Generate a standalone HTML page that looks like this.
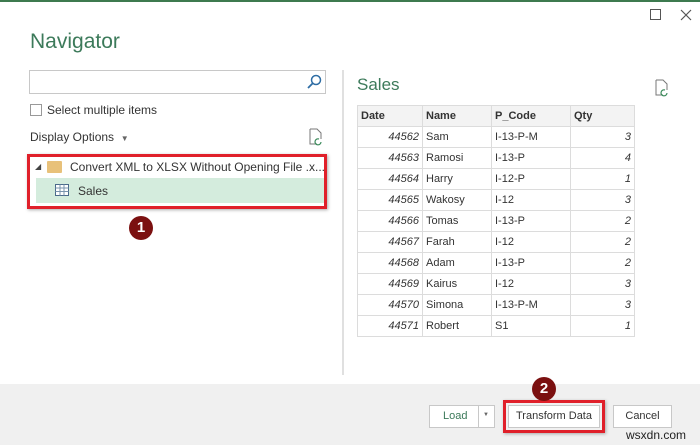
<!DOCTYPE html>
<html><head><style>
*{box-sizing:border-box;margin:0;padding:0}
body{width:700px;height:445px;background:#fff;font-family:"Liberation Sans",sans-serif;font-size:12px;color:#333;position:relative;overflow:hidden}
.a{position:absolute}
table{border-collapse:collapse;font-size:11px}
td{border:1px solid #dcdcdc;height:21px;padding:0 3px}
</style></head><body>
<div class="a" style="left:0;top:0;width:700px;height:2px;background:#3d7a4f"></div>
<div class="a" style="left:650px;top:9px;width:11px;height:11px;border:1px solid #555"></div>
<svg class="a" style="left:680px;top:9px" width="12" height="12"><path d="M1 1L11 11M11 1L1 11" stroke="#555" stroke-width="1.2"/></svg>
<div class="a" style="left:30px;top:30px;font-size:21px;color:#3c7a5a">Navigator</div>
<div class="a" style="left:29px;top:70px;width:297px;height:24px;border:1px solid #c8c8c8"></div>
<svg class="a" style="left:306px;top:74px" width="16" height="16"><circle cx="10" cy="6" r="4.5" fill="none" stroke="#2e6da4" stroke-width="1.5"/><line x1="7" y1="9" x2="2" y2="14" stroke="#2e6da4" stroke-width="1.8"/></svg>
<div class="a" style="left:30px;top:104px;width:12px;height:12px;border:1px solid #999"></div>
<div class="a" style="left:47px;top:103px;font-size:12px">Select multiple items</div>
<div class="a" style="left:30px;top:130px;font-size:12px">Display Options &nbsp;<span style="font-size:8px;color:#666">▼</span></div>
<svg class="a" style="left:308px;top:128px" width="16" height="18"><path d="M2 1h7l4 4v6M2 1v15h7" fill="none" stroke="#777"/><path d="M11 11a3 3 0 1 0 2 3" fill="none" stroke="#3a8a5a" stroke-width="1.2"/></svg>
<div class="a" style="left:27px;top:154px;width:300px;height:55px;border:3px solid #e0202a;box-shadow:1px 1px 3px #aaa"></div>
<div class="a" style="left:35px;top:162px;font-size:8px;color:#444">◢</div>
<div class="a" style="left:47px;top:161px;width:15px;height:12px;background:#e8c17a;border-radius:1px"></div>
<div class="a" style="left:70px;top:160px;font-size:12px;color:#333">Convert XML to XLSX Without Opening File .x...</div>
<div class="a" style="left:36px;top:178px;width:288px;height:25px;background:#d4ecdd"></div>
<svg class="a" style="left:55px;top:184px" width="14" height="12"><rect x=".5" y=".5" width="13" height="11" fill="#fff" stroke="#4a6a8a"/><path d="M.5 4h13M.5 7.5h13M5 .5v11M9 .5v11" stroke="#7a94ad"/></svg>
<div class="a" style="left:78px;top:184px;font-size:12px">Sales</div>
<div class="a" style="left:129px;top:216px;width:24px;height:24px;border-radius:50%;background:#7b1010;color:#fff;font-weight:bold;font-size:15px;text-align:center;line-height:24px">1</div>
<div class="a" style="left:342px;top:70px;width:2px;height:305px;background:#e0e0e0"></div>
<div class="a" style="left:357px;top:75px;font-size:17px;color:#3c7a5a">Sales</div>
<svg class="a" style="left:654px;top:79px" width="16" height="18"><path d="M2 1h7l4 4v6M2 1v15h7" fill="none" stroke="#777"/><path d="M11 11a3 3 0 1 0 2 3" fill="none" stroke="#3a8a5a" stroke-width="1.2"/></svg>
<table class="a" style="left:357px;top:105px;width:278px">
<tr style="background:#f3f3f3;font-weight:bold"><td style="width:65px">Date</td><td style="width:69px">Name</td><td style="width:79px">P_Code</td><td>Qty</td></tr>
<tr><td align=right><i>44562</i></td><td>Sam</td><td>I-13-P-M</td><td align=right><i>3</i></td></tr>
<tr><td align=right><i>44563</i></td><td>Ramosi</td><td>I-13-P</td><td align=right><i>4</i></td></tr>
<tr><td align=right><i>44564</i></td><td>Harry</td><td>I-12-P</td><td align=right><i>1</i></td></tr>
<tr><td align=right><i>44565</i></td><td>Wakosy</td><td>I-12</td><td align=right><i>3</i></td></tr>
<tr><td align=right><i>44566</i></td><td>Tomas</td><td>I-13-P</td><td align=right><i>2</i></td></tr>
<tr><td align=right><i>44567</i></td><td>Farah</td><td>I-12</td><td align=right><i>2</i></td></tr>
<tr><td align=right><i>44568</i></td><td>Adam</td><td>I-13-P</td><td align=right><i>2</i></td></tr>
<tr><td align=right><i>44569</i></td><td>Kairus</td><td>I-12</td><td align=right><i>3</i></td></tr>
<tr><td align=right><i>44570</i></td><td>Simona</td><td>I-13-P-M</td><td align=right><i>3</i></td></tr>
<tr><td align=right><i>44571</i></td><td>Robert</td><td>S1</td><td align=right><i>1</i></td></tr>
</table>
<div class="a" style="left:0;top:384px;width:700px;height:61px;background:#f0f0f0"></div>
<div class="a" style="left:429px;top:405px;width:66px;height:23px;background:#fff;border:1px solid #c8c8c8"></div>
<div class="a" style="left:443px;top:410px;font-size:11px;color:#3c7a5a">Load</div>
<div class="a" style="left:478px;top:405px;width:1px;height:23px;background:#c8c8c8"></div>
<div class="a" style="left:483px;top:412px;font-size:6px;color:#666">▼</div>
<div class="a" style="left:503px;top:400px;width:102px;height:33px;border:3px solid #e0202a;box-shadow:1px 1px 3px #aaa"></div>
<div class="a" style="left:508px;top:405px;width:92px;height:23px;background:#fff;border:1px solid #c8c8c8;text-align:center;line-height:21px;font-size:11px">Transform Data</div>
<div class="a" style="left:613px;top:405px;width:59px;height:23px;background:#fff;border:1px solid #c8c8c8;text-align:center;line-height:21px;font-size:11px">Cancel</div>
<div class="a" style="left:532px;top:377px;width:24px;height:24px;border-radius:50%;background:#7b1010;color:#fff;font-weight:bold;font-size:15px;text-align:center;line-height:24px">2</div>
<div class="a" style="left:626px;top:428px;font-size:12px;color:#222">wsxdn.com</div>
</body></html>
